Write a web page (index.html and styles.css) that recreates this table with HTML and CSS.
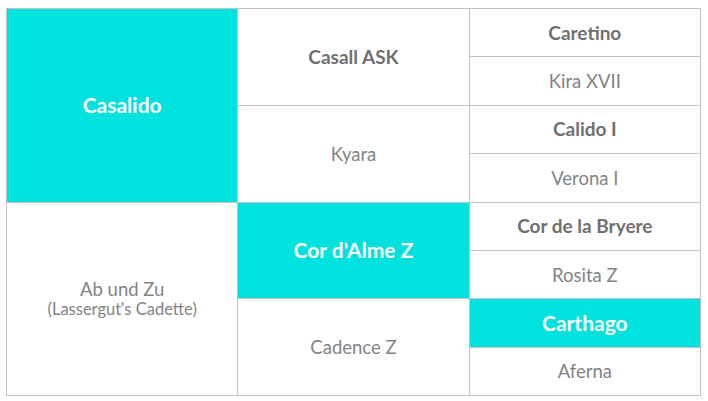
FILE: index.html
```html
<!DOCTYPE html>
<html>
<head>
<meta charset="utf-8">
<link rel="stylesheet" href="styles.css">
</head>
<body>
<div class="pedigree">
  <div class="cell g1 hl bold r1">Casalido</div>
  <div class="cell g1 r5"><span>Ab und Zu</span><span class="sub">(Lassergut's Cadette)</span></div>
  <div class="cell g2 bold r1">Casall ASK</div>
  <div class="cell g2 r3">Kyara</div>
  <div class="cell g2 hl bold r5">Cor d'Alme Z</div>
  <div class="cell g2 r7">Cadence Z</div>
  <div class="cell g3 bold">Caretino</div>
  <div class="cell g3">Kira XVII</div>
  <div class="cell g3 bold">Calido I</div>
  <div class="cell g3">Verona I</div>
  <div class="cell g3 bold">Cor de la Bryere</div>
  <div class="cell g3">Rosita Z</div>
  <div class="cell g3 hl bold">Carthago</div>
  <div class="cell g3">Aferna</div>
</div>
</body>
</html>
```
FILE: styles.css
```css
html, body {
  margin: 0;
  padding: 0;
  background: #ffffff;
}
body {
  padding: 8px 7px 5px 6px;
  font-family: Lato, "Open Sans", sans-serif;
}
.pedigree {
  display: grid;
  grid-template-columns: 1fr 1fr 1fr;
  grid-template-rows: repeat(8, 1fr);
  height: 386px;
  gap: 1px;
  background: #c2c2c2;
  border: 1px solid #c2c2c2;
}
.cell {
  background: #ffffff;
  color: #838383;
  font-size: 18.5px;
  line-height: 20px;
  display: flex;
  flex-direction: column;
  align-items: center;
  justify-content: center;
  text-align: center;
}
.g1 { grid-column: 1; grid-row-end: span 4; }
.g2 { grid-column: 2; grid-row-end: span 2; }
.g3 { grid-column: 3; }
.r1 { grid-row-start: 1; }
.r3 { grid-row-start: 3; }
.r5 { grid-row-start: 5; }
.r7 { grid-row-start: 7; }
.bold {
  font-weight: 700;
  font-size: 19px;
  color: #707070;
}
.hl {
  background: #00e2dd;
  color: #ffffff;
  font-size: 21px;
}
.sub {
  font-size: 16.5px;
}
```
